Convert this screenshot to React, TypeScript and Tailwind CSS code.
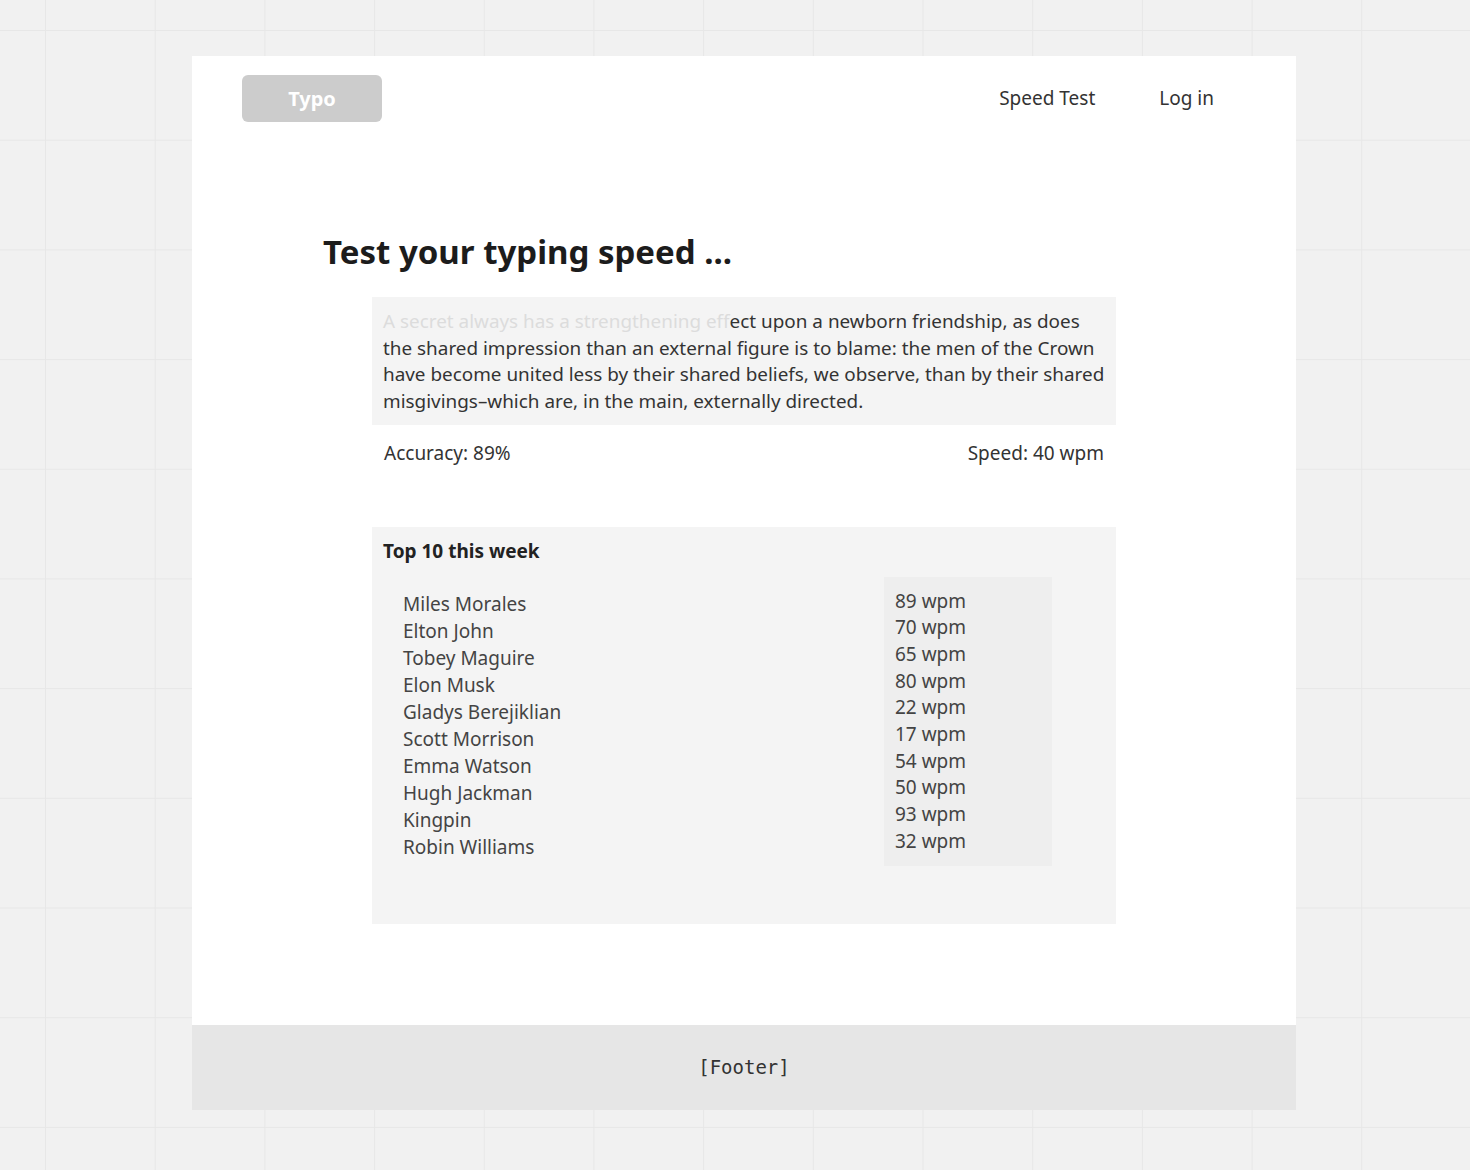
import React from "react";

const leaders = [
  { name: "Miles Morales", wpm: 89 },
  { name: "Elton John", wpm: 70 },
  { name: "Tobey Maguire", wpm: 65 },
  { name: "Elon Musk", wpm: 80 },
  { name: "Gladys Berejiklian", wpm: 22 },
  { name: "Scott Morrison", wpm: 17 },
  { name: "Emma Watson", wpm: 54 },
  { name: "Hugh Jackman", wpm: 50 },
  { name: "Kingpin", wpm: 93 },
  { name: "Robin Williams", wpm: 32 },
];

const typed = "A secret always has a strengthening ef";
const rest =
  "ect upon a newborn friendship, as does the shared impression than an external figure is to blame: the men of the Crown have become united less by their shared beliefs, we observe, than by their shared misgivings\u2013which are, in the main, externally directed.";

export default function App() {
  return (
    <div className="min-h-[1170px] w-full bg-[#f1f1f1] bg-[linear-gradient(to_right,#e7e7e7_1px,transparent_1px),linear-gradient(to_bottom,#e7e7e7_1px,transparent_1px)] bg-[size:109.7px_109.7px] bg-[position:45px_30px] pt-[56px] font-['Noto_Sans',sans-serif] text-[#333]">
      <div className="w-[1104px] bg-white ml-[192px]">
        {/* header */}
        <div className="flex items-center justify-between pl-[50px] pr-[50px] pt-[19px]">
          <div className="flex h-[47px] w-[140px] items-center justify-center rounded-[6px] bg-[#cccccc] text-[20px] font-bold text-white">
            Typo
          </div>
          <nav className="flex items-center text-[19px] text-[#333]">
            <a className="px-8">Speed Test</a>
            <a className="px-8">Log in</a>
          </nav>
        </div>

        <div className="pl-[131px] pt-[110px]">
          <h1 className="text-[33px] font-bold leading-[40px] text-[#1c1c1c]">Test your typing speed ...</h1>
        </div>

        <div className="mx-[180px] mt-[25px]">
          <p className="bg-[#f4f4f4] pl-[11px] pr-[8px] pt-[11px] pb-[10px] text-[18.9px] leading-[26.7px] text-[#333]">
            <span className="text-[#dcdcdc]">{typed}</span>
            <span className="text-[#111] underline decoration-[#111] decoration-[1.5px] underline-offset-[3px]">f</span>
            {rest}
          </p>
          <div className="mt-[15px] flex justify-between px-[12px] text-[19px] leading-[26px]">
            <span>Accuracy: 89%</span>
            <span>Speed: 40 wpm</span>
          </div>

          <div className="mt-[61px] bg-[#f4f4f4] px-[11px] pt-[11px] pb-[58px] text-[19px]">
            <div className="font-bold leading-[26.7px] text-[#222]">Top 10 this week</div>
            <div className="mt-[12px] flex">
              <ul className="w-[501px] pl-[20px] pt-[14px] leading-[27px] text-[#444]">
                {leaders.map((l) => (
                  <li key={l.name}>{l.name}</li>
                ))}
              </ul>
              <ul className="w-[168px] bg-[#eeeeee] px-[11px] py-[11px] leading-[26.7px] text-[#444]">
                {leaders.map((l) => (
                  <li key={l.name}>{l.wpm} wpm</li>
                ))}
              </ul>
            </div>
          </div>
        </div>

        <div className="h-[101px]" />
        <footer className="flex h-[85px] items-center justify-center bg-[#e6e6e6] font-['DejaVu_Sans_Mono',monospace] text-[19px] text-[#333]">
          [Footer]
        </footer>
      </div>
    </div>
  );
}
